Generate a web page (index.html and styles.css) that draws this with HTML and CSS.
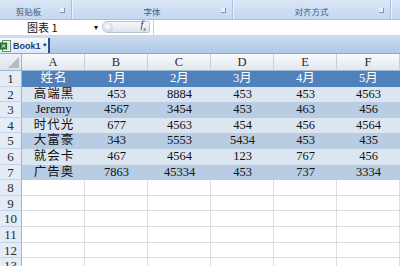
FILE: index.html
```html
<!DOCTYPE html>
<html>
<head>
<meta charset="utf-8">
<link rel="stylesheet" href="styles.css">
</head>
<body>
<div class="app">
  <div class="ribbon">
    <div class="group g1"><span class="glabel">剪贴板</span><span class="launch"></span></div>
    <div class="group g2"><span class="glabel">字体</span><span class="launch"></span></div>
    <div class="group g3"><span class="glabel">对齐方式</span><span class="launch"></span></div>
    <div class="group g4"></div>
  </div>
  <div class="fbar">
    <div class="namebox"><span class="name">图表 1</span><span class="arrow">▾</span></div>
    <div class="pill"><span class="knob"></span><span class="fx">f<sub>x</sub></span></div>
    <div class="finput"></div>
  </div>
  <div class="tabbar">
    <div class="tab">
      <svg class="xlicon" width="11" height="12" viewBox="0 0 11 12">
        <rect x="2.5" y="0.5" width="8" height="11" fill="#fff" stroke="#6d8a6a"/>
        <rect x="0.5" y="3" width="6" height="6" fill="#2f8a3a" stroke="#1f6a2a"/>
        <path d="M2 4.5 L5 7.5 M5 4.5 L2 7.5" stroke="#fff" stroke-width="1"/>
        <path d="M7 3h2.5M7 5h2.5M7 7h2.5M7 9h2.5" stroke="#9bb59a" stroke-width="0.8"/>
      </svg>
      <span class="tabtext">Book1 *</span>
    </div>
  </div>
  <div class="sheet">
    <div class="corner"><svg width="22" height="17" viewBox="0 0 22 17"><polygon points="19,3 19,14 8,14" fill="#b7bcc3"/></svg></div>
    <div class="ch">A</div><div class="ch">B</div><div class="ch">C</div><div class="ch">D</div><div class="ch">E</div><div class="ch">F</div>

    <div class="rh">1</div>
    <div class="c hd zh">姓名</div><div class="c hd">1月</div><div class="c hd">2月</div><div class="c hd">3月</div><div class="c hd">4月</div><div class="c hd">5月</div>

    <div class="rh">2</div>
    <div class="c b1 zh">高端黑</div><div class="c b1">453</div><div class="c b1">8884</div><div class="c b1">453</div><div class="c b1">453</div><div class="c b1">4563</div>

    <div class="rh">3</div>
    <div class="c b2">Jeremy</div><div class="c b2">4567</div><div class="c b2">3454</div><div class="c b2">453</div><div class="c b2">463</div><div class="c b2">456</div>

    <div class="rh">4</div>
    <div class="c b1 zh">时代光</div><div class="c b1">677</div><div class="c b1">4563</div><div class="c b1">454</div><div class="c b1">456</div><div class="c b1">4564</div>

    <div class="rh">5</div>
    <div class="c b2 zh">大富豪</div><div class="c b2">343</div><div class="c b2">5553</div><div class="c b2">5434</div><div class="c b2">453</div><div class="c b2">435</div>

    <div class="rh">6</div>
    <div class="c b1 zh">就会卡</div><div class="c b1">467</div><div class="c b1">4564</div><div class="c b1">123</div><div class="c b1">767</div><div class="c b1">456</div>

    <div class="rh">7</div>
    <div class="c b2 zh">广告奥</div><div class="c b2">7863</div><div class="c b2">45334</div><div class="c b2">453</div><div class="c b2">737</div><div class="c b2">3334</div>

    <div class="rh">8</div><div class="c e"></div><div class="c e"></div><div class="c e"></div><div class="c e"></div><div class="c e"></div><div class="c e"></div>
    <div class="rh">9</div><div class="c e"></div><div class="c e"></div><div class="c e"></div><div class="c e"></div><div class="c e"></div><div class="c e"></div>
    <div class="rh">10</div><div class="c e"></div><div class="c e"></div><div class="c e"></div><div class="c e"></div><div class="c e"></div><div class="c e"></div>
    <div class="rh">11</div><div class="c e"></div><div class="c e"></div><div class="c e"></div><div class="c e"></div><div class="c e"></div><div class="c e"></div>
    <div class="rh">12</div><div class="c e"></div><div class="c e"></div><div class="c e"></div><div class="c e"></div><div class="c e"></div><div class="c e"></div>
    <div class="rh">13</div><div class="c e"></div><div class="c e"></div><div class="c e"></div><div class="c e"></div><div class="c e"></div><div class="c e"></div>
  </div>
</div>
</body>
</html>
```
FILE: styles.css
```css
html, body {
  margin: 0;
  padding: 0;
  background: #ffffff;
  overflow: hidden;
}
.app {
  width: 400px;
  height: 266px;
  overflow: hidden;
  font-family: "Liberation Serif", "Noto Sans CJK SC", serif;
}
.ribbon {
  display: flex;
  height: 19px;
  background: linear-gradient(#d9e6f6, #c4d8f0);
  border-bottom: 1px solid #a7bfdc;
}
.group {
  position: relative;
  display: flex;
  align-items: center;
  justify-content: center;
  border-right: 1px solid #a9c1dd;
  box-shadow: 1px 0 0 #eef4fb;
}
.g1 { width: 72px; padding-right: 14px; box-sizing: border-box; }
.g2 { width: 160px; }
.g3 { width: 157px; }
.g4 { flex: 1; border-right: none; box-shadow: none; }
.glabel {
  font-family: "Noto Sans CJK SC", sans-serif;
  font-size: 8.5px;
  color: #3f5b86;
  padding-top: 3px;
}
.launch {
  position: absolute;
  right: 6px;
  top: 8px;
  width: 4px;
  height: 4px;
  border-right: 1px solid #7f95b3;
  border-bottom: 1px solid #7f95b3;
  background: #e8eef6;
}
.fbar {
  display: flex;
  height: 15px;
  background: #ffffff;
  border-bottom: 1px solid #c9d7ea;
}
.namebox {
  width: 102px;
  display: flex;
  align-items: center;
}
.name {
  margin-left: 27px;
  font-family: "Noto Sans CJK SC", sans-serif;
  font-size: 11px;
  color: #111;
  flex: 1;
  line-height: 15px;
}
.arrow {
  font-size: 8px;
  color: #111;
  margin-right: 4px;
}
.pill {
  width: 48px;
  height: 12px;
  margin-top: 1px;
  border-radius: 7px 2px 2px 7px;
  background: linear-gradient(#f4f6f9, #dfe4ea);
  border: 1px solid #b9c3cf;
  box-sizing: border-box;
  display: flex;
  align-items: center;
  justify-content: space-between;
}
.knob {
  width: 9px;
  height: 9px;
  border-radius: 50%;
  background: radial-gradient(circle at 40% 40%, #ffffff, #b9c1cc);
  margin-left: 1px;
}
.fx {
  font-style: italic;
  font-size: 10px;
  color: #333;
  margin-right: 3px;
  line-height: 10px;
}
.fx sub { font-size: 6px; }
.finput {
  flex: 1;
  border-left: 1px solid #c9d2dd;
  margin-left: 3px;
}
.tabbar {
  height: 17px;
  background: linear-gradient(#cddcf0, #aec8e7);
  border-bottom: 1px solid #8faacb;
  display: flex;
  align-items: flex-end;
}
.tab {
  width: 50px;
  height: 15px;
  display: flex;
  align-items: center;
  background: linear-gradient(#f6f9fd, #dde8f5);
  border-right: 2px solid #2b4f86;
  box-sizing: border-box;
}
.xlicon { margin-right: 2px; }
.tabtext {
  font-family: "Liberation Sans", sans-serif;
  font-weight: bold;
  font-size: 9px;
  color: #1a3f78;
}
.sheet {
  display: grid;
  grid-template-columns: 22px repeat(6, 63px);
  grid-template-rows: 17px;
  grid-auto-rows: 15.6px;
}
.corner {
  background: linear-gradient(#eef2f7, #dde3ea);
  border-right: 1px solid #9eb6ce;
  border-bottom: 1px solid #9eb6ce;
  box-sizing: border-box;
  overflow: hidden;
}
.corner svg { display: block; }
.ch {
  background: linear-gradient(#f8fafc, #e2e8ef);
  border-right: 1px solid #c5d0dc;
  border-bottom: 1px solid #9eb6ce;
  box-sizing: border-box;
  font-size: 12.5px;
  color: #2b2b2b;
  text-align: center;
  line-height: 17px;
}
.rh {
  background: #e4ecf7;
  border-right: 1px solid #9eb6ce;
  border-bottom: 1px solid #c6d3e3;
  box-sizing: border-box;
  font-size: 13px;
  color: #2b2b2b;
  text-align: center;
  line-height: 15px;
}
.c {
  font-size: 12.5px;
  color: #111;
  text-align: center;
  line-height: 15.6px;
  white-space: nowrap;
  overflow: hidden;
}
.zh { letter-spacing: 1px; text-indent: 1px; }
.hd { background: #4f81bd; color: #ffffff; }
.b1 { background: #dce6f1; }
.b2 { background: #b8cce4; }
.e {
  border-right: 1px solid #dadfe5;
  border-bottom: 1px solid #dadfe5;
  box-sizing: border-box;
}
```
